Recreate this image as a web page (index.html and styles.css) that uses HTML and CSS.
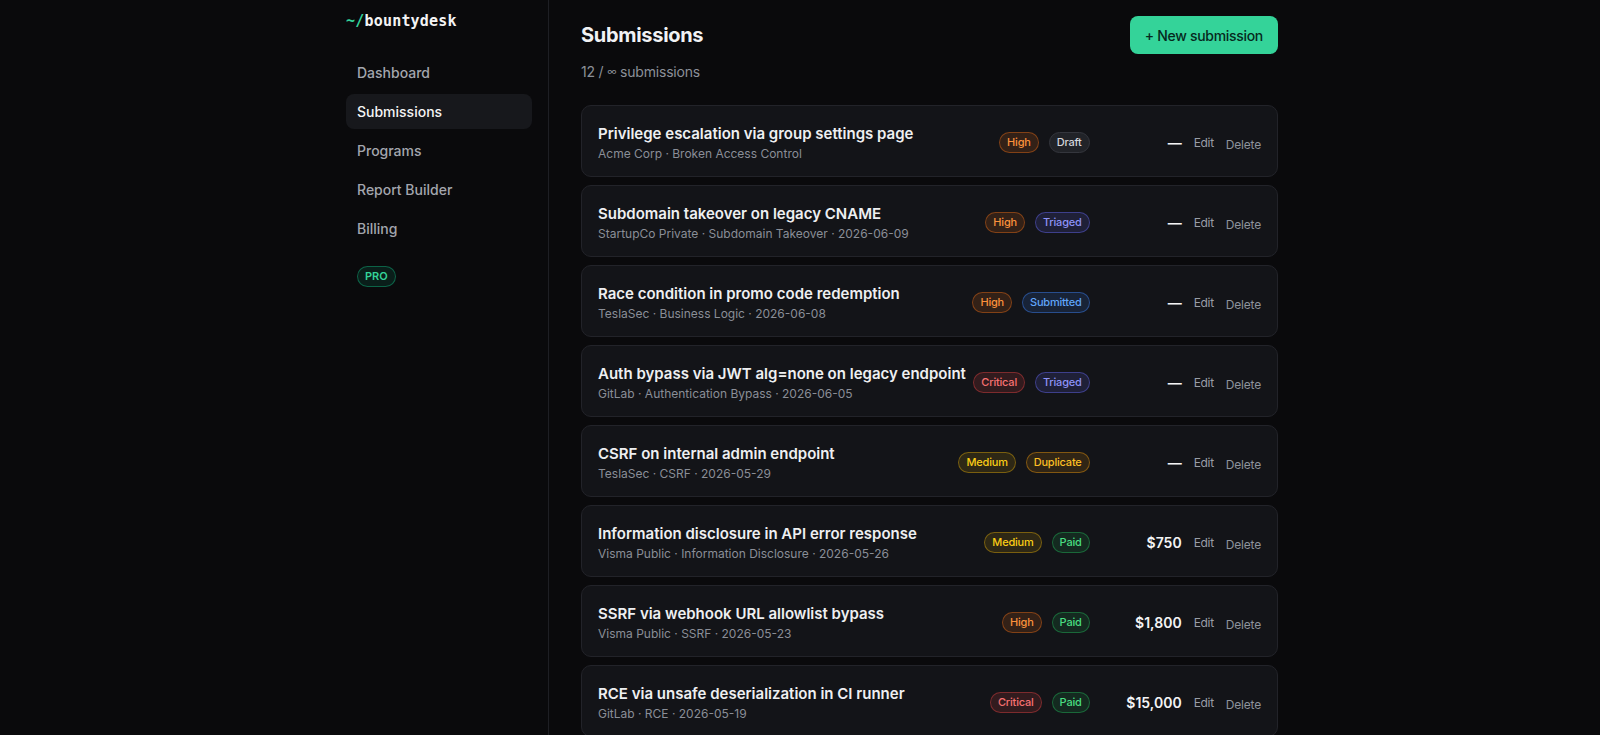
FILE: index.html
```html
<!DOCTYPE html>
<html lang="en">
<head>
    <meta charset="UTF-8">
    <title>bountydesk - Submissions</title>
    <link rel="stylesheet" href="styles.css">
</head>
<body>
    <div class="app">
        <aside class="sidebar">
            <div class="logo"><span class="logo-path">~/</span>bountydesk</div>
            <nav class="nav">
                <a class="nav-item" href="#">Dashboard</a>
                <a class="nav-item active" href="#">Submissions</a>
                <a class="nav-item" href="#">Programs</a>
                <a class="nav-item" href="#">Report Builder</a>
                <a class="nav-item" href="#">Billing</a>
            </nav>
            <span class="plan">PRO</span>
        </aside>

        <main class="main">
            <div class="page-head">
                <h1>Submissions</h1>
                <button class="btn-primary">+ New submission</button>
            </div>
            <p class="count">12 / <span class="inf">∞</span> submissions</p>

            <div class="list">
                <div class="card">
                    <div class="info">
                        <div class="title">Privilege escalation via group settings page</div>
                        <div class="meta">Acme Corp · Broken Access Control</div>
                    </div>
                    <div class="badges"><span class="badge high">High</span><span class="badge draft">Draft</span></div>
                    <div class="amount">—</div>
                    <a class="edit" href="#">Edit</a>
                    <button class="delete">Delete</button>
                </div>
                <div class="card">
                    <div class="info">
                        <div class="title">Subdomain takeover on legacy CNAME</div>
                        <div class="meta">StartupCo Private · Subdomain Takeover · 2026-06-09</div>
                    </div>
                    <div class="badges"><span class="badge high">High</span><span class="badge triaged">Triaged</span></div>
                    <div class="amount">—</div>
                    <a class="edit" href="#">Edit</a>
                    <button class="delete">Delete</button>
                </div>
                <div class="card">
                    <div class="info">
                        <div class="title">Race condition in promo code redemption</div>
                        <div class="meta">TeslaSec · Business Logic · 2026-06-08</div>
                    </div>
                    <div class="badges"><span class="badge high">High</span><span class="badge submitted">Submitted</span></div>
                    <div class="amount">—</div>
                    <a class="edit" href="#">Edit</a>
                    <button class="delete">Delete</button>
                </div>
                <div class="card">
                    <div class="info">
                        <div class="title">Auth bypass via JWT alg=none on legacy endpoint</div>
                        <div class="meta">GitLab · Authentication Bypass · 2026-06-05</div>
                    </div>
                    <div class="badges"><span class="badge critical">Critical</span><span class="badge triaged">Triaged</span></div>
                    <div class="amount">—</div>
                    <a class="edit" href="#">Edit</a>
                    <button class="delete">Delete</button>
                </div>
                <div class="card">
                    <div class="info">
                        <div class="title">CSRF on internal admin endpoint</div>
                        <div class="meta">TeslaSec · CSRF · 2026-05-29</div>
                    </div>
                    <div class="badges"><span class="badge medium">Medium</span><span class="badge duplicate">Duplicate</span></div>
                    <div class="amount">—</div>
                    <a class="edit" href="#">Edit</a>
                    <button class="delete">Delete</button>
                </div>
                <div class="card">
                    <div class="info">
                        <div class="title">Information disclosure in API error response</div>
                        <div class="meta">Visma Public · Information Disclosure · 2026-05-26</div>
                    </div>
                    <div class="badges"><span class="badge medium">Medium</span><span class="badge paid">Paid</span></div>
                    <div class="amount">$750</div>
                    <a class="edit" href="#">Edit</a>
                    <button class="delete">Delete</button>
                </div>
                <div class="card">
                    <div class="info">
                        <div class="title">SSRF via webhook URL allowlist bypass</div>
                        <div class="meta">Visma Public · SSRF · 2026-05-23</div>
                    </div>
                    <div class="badges"><span class="badge high">High</span><span class="badge paid">Paid</span></div>
                    <div class="amount">$1,800</div>
                    <a class="edit" href="#">Edit</a>
                    <button class="delete">Delete</button>
                </div>
                <div class="card">
                    <div class="info">
                        <div class="title">RCE via unsafe deserialization in CI runner</div>
                        <div class="meta">GitLab · RCE · 2026-05-19</div>
                    </div>
                    <div class="badges"><span class="badge critical">Critical</span><span class="badge paid">Paid</span></div>
                    <div class="amount">$15,000</div>
                    <a class="edit" href="#">Edit</a>
                    <button class="delete">Delete</button>
                </div>
            </div>
        </main>
    </div>
</body>
</html>
```

FILE: styles.css
```css
* {
    box-sizing: border-box;
}
body {
    margin: 0;
    font-family: 'Inter', 'Liberation Sans', sans-serif;
    background: #0a0a0c;
    color: #f1f2f4;
    overflow: hidden;
}
a {
    text-decoration: none;
}

.app {
    display: flex;
    width: 980px;
    margin-left: calc(50% - 470px);
    min-height: 100vh;
}

/* sidebar */
.sidebar {
    flex: none;
    width: 219px;
    padding: 11px 16px;
    border-right: 1px solid #1e1f24;
}
.logo {
    font-family: 'DejaVu Sans Mono', 'Liberation Mono', monospace;
    font-weight: bold;
    font-size: 15px;
    line-height: 20px;
    color: #f4f4f5;
    letter-spacing: 0.2px;
}
.logo-path {
    color: #34d399;
}
.nav {
    display: flex;
    flex-direction: column;
    gap: 4px;
    margin-top: 24px;
}
.nav-item {
    display: block;
    padding: 9px 11px;
    font-size: 14px;
    line-height: 17px;
    font-weight: 500;
    color: #a3a6ae;
    border-radius: 8px;
}
.nav-item.active {
    background: #17181c;
    color: #f4f4f5;
}
.plan {
    display: inline-block;
    margin: 20px 0 0 11px;
    padding: 0 7px;
    font-size: 11px;
    line-height: 19px;
    font-weight: 600;
    color: #34d399;
    background: rgba(16, 185, 129, 0.12);
    border: 1px solid rgba(16, 185, 129, 0.45);
    border-radius: 999px;
}

/* main */
.main {
    flex: none;
    width: 761px;
    padding: 16px 32px 32px;
}
.page-head {
    display: flex;
    align-items: center;
    justify-content: space-between;
}
.page-head h1 {
    margin: 0;
    font-size: 20px;
    font-weight: 700;
    letter-spacing: -0.3px;
}
.btn-primary {
    height: 38px;
    padding: 0 15px;
    font-family: inherit;
    font-size: 14px;
    font-weight: 500;
    letter-spacing: -0.3px;
    color: #06291d;
    background: #34d399;
    border: none;
    border-radius: 8px;
    cursor: pointer;
}
.count {
    margin: 7px 0 0;
    font-size: 14px;
    line-height: 20px;
    letter-spacing: -0.2px;
    color: #8c9099;
}
.inf {
    font-size: 10px;
    vertical-align: 2px;
}

.list {
    display: flex;
    flex-direction: column;
    gap: 8px;
    margin-top: 23px;
}
.card {
    display: flex;
    align-items: center;
    gap: 12px;
    padding: 17px 16px 14px;
    background: #131418;
    border: 1px solid #222329;
    border-radius: 10px;
}
.info {
    flex: 1;
    min-width: 0;
}
.title {
    font-size: 15px;
    line-height: 21px;
    font-weight: 600;
    color: #eeeff1;
    white-space: nowrap;
}
.meta {
    margin-top: 2px;
    font-size: 12px;
    line-height: 16px;
    color: #8a8e97;
    white-space: nowrap;
}

.badges {
    display: flex;
    gap: 10px;
}
.badge {
    padding: 0 7px;
    font-size: 11px;
    line-height: 19px;
    font-weight: 500;
    letter-spacing: -0.2px;
    border: 1px solid;
    border-radius: 999px;
}
.high { color: #fb923c; background: rgba(249, 115, 22, 0.14); border-color: rgba(249, 115, 22, 0.4); }
.critical { color: #f87171; background: rgba(239, 68, 68, 0.14); border-color: rgba(239, 68, 68, 0.4); }
.medium { color: #facc15; background: rgba(234, 179, 8, 0.13); border-color: rgba(234, 179, 8, 0.4); }
.draft { color: #d4d6db; background: #212328; border-color: #34363d; }
.triaged { color: #8e93f7; background: rgba(99, 102, 241, 0.15); border-color: rgba(99, 102, 241, 0.45); }
.submitted { color: #60a5fa; background: rgba(59, 130, 246, 0.14); border-color: rgba(59, 130, 246, 0.45); }
.duplicate { color: #fbbf24; background: rgba(245, 158, 11, 0.13); border-color: rgba(245, 158, 11, 0.42); }
.paid { color: #4ade80; background: rgba(34, 197, 94, 0.13); border-color: rgba(34, 197, 94, 0.4); }

.amount {
    width: 80px;
    text-align: right;
    font-size: 14px;
    font-weight: 600;
    color: #f4f4f5;
}
.edit {
    font-size: 12px;
    letter-spacing: -0.3px;
    color: #9a9ea7;
}
.delete {
    margin-top: 3px;
    padding: 0;
    font-family: inherit;
    font-size: 12px;
    letter-spacing: -0.2px;
    color: #8f939c;
    background: none;
    border: none;
    cursor: pointer;
}
```
